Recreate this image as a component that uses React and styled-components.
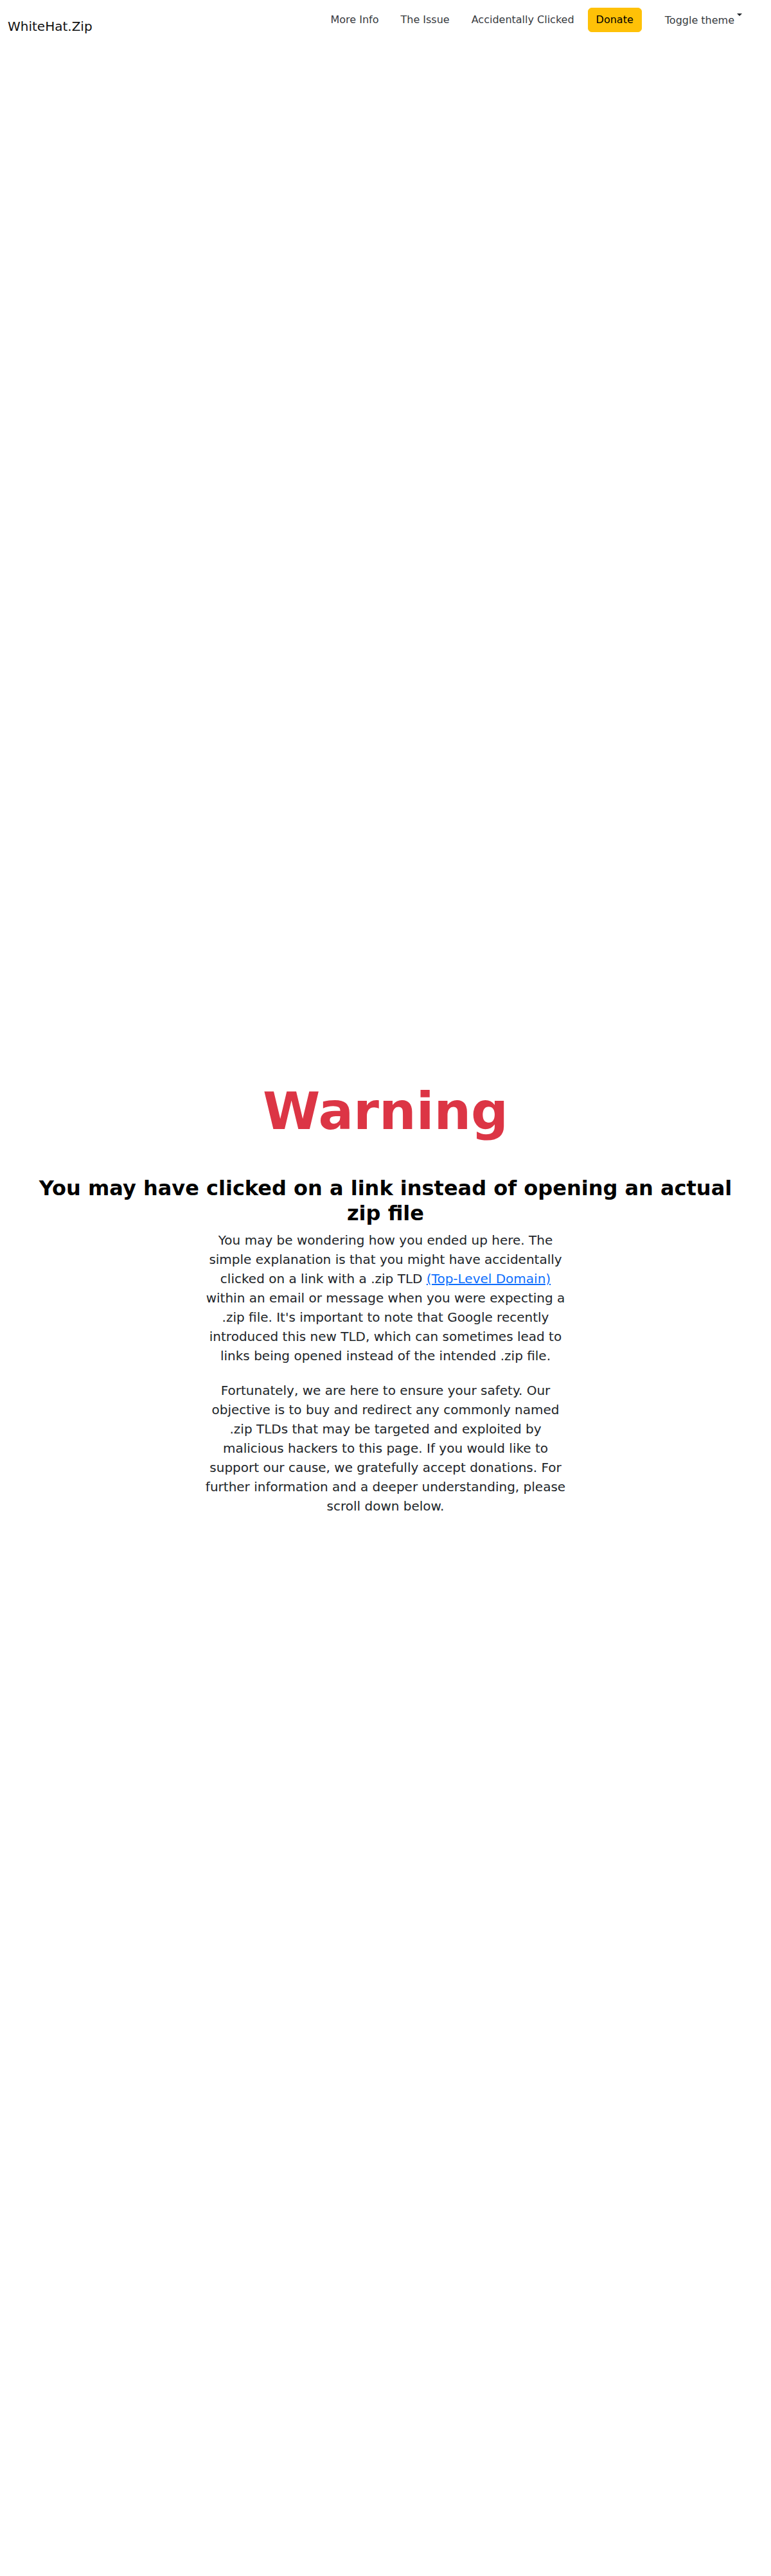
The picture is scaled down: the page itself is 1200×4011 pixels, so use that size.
import React from 'react';
import styled, { createGlobalStyle } from 'styled-components';

const GlobalStyle = createGlobalStyle`
  body {
    margin: 0;
    background: #ffffff;
    color: #212529;
    font-family: "DejaVu Sans", "Liberation Sans", sans-serif;
    font-size: 16px;
    line-height: 1.5;
  }
`;

const Header = styled.nav`
  display: flex;
  align-items: flex-start;
  justify-content: space-between;
  padding: 12px 33px 12px 12px;
`;

const Brand = styled.a`
  margin-top: 14px;
  font-size: 20px;
  line-height: 30px;
  color: #111111;
  text-decoration: none;
`;

const NavList = styled.ul`
  display: flex;
  align-items: center;
  height: 38px;
  margin: 0;
  padding: 0;
  list-style: none;
`;

const NavLink = styled.a`
  display: block;
  padding: 0 17px;
  line-height: 24px;
  color: #383b3f;
  text-decoration: none;
  cursor: pointer;
`;

const DonateButton = styled.button`
  margin-left: 4px;
  padding: 6px 12px;
  border: 1px solid #ffc107;
  border-radius: 6px;
  background: #ffc107;
  color: #000000;
  font-family: inherit;
  font-size: 16px;
  line-height: 24px;
  cursor: pointer;
`;

const ThemeToggle = styled.button`
  display: flex;
  align-items: flex-start;
  margin-left: 24px;
  padding: 2px 12px 0;
  border: 0;
  background: transparent;
  color: #383b3f;
  font-family: inherit;
  font-size: 16px;
  line-height: 24px;
  cursor: pointer;
`;

const Caret = styled.span`
  margin: 1px 0 0 4px;
  border-top: 4px solid #212529;
  border-left: 4px solid transparent;
  border-right: 4px solid transparent;
`;

const Hero = styled.main`
  padding-top: 1614px;
  text-align: center;
`;

const Container = styled.div`
  max-width: 1116px;
  margin: 0 auto;
  padding: 0 12px;
`;

const Title = styled.h1`
  margin: 0 0 52px;
  font-size: 81px;
  font-weight: 700;
  line-height: 1.2;
  color: #dc3545;
`;

const Subtitle = styled.h2`
  margin: 0 0 8px;
  font-size: 32px;
  font-weight: 700;
  line-height: 1.2;
  color: #000000;
`;

const TextColumn = styled.div`
  width: 576px;
  margin: 0 auto;
`;

const Lead = styled.p`
  margin: 0 0 24px;
  font-size: 20px;
  line-height: 30px;
  color: #212529;
`;

const InlineLink = styled.a`
  color: #0d6efd;
  text-decoration: underline;
`;

const links = ['More Info', 'The Issue', 'Accidentally Clicked'];

export default function App() {
  return (
    <>
      <GlobalStyle />
      <Header>
        <Brand href="#">WhiteHat.Zip</Brand>
        <NavList>
          {links.map((label) => (
            <li key={label}>
              <NavLink>{label}</NavLink>
            </li>
          ))}
          <li>
            <DonateButton>Donate</DonateButton>
          </li>
          <li>
            <ThemeToggle>
              Toggle theme
              <Caret />
            </ThemeToggle>
          </li>
        </NavList>
      </Header>

      <Hero>
        <Container>
          <Title>Warning</Title>
          <Subtitle>You may have clicked on a link instead of opening an actual zip file</Subtitle>
          <TextColumn>
            <Lead>
              You may be wondering how you ended up here. The simple explanation is that you might have
              accidentally clicked on a link with a .zip TLD{' '}
              <InlineLink href="#">(Top-Level Domain)</InlineLink> within an email or message when you
              were expecting a .zip file. It's important to note that Google recently introduced this new
              TLD, which can sometimes lead to links being opened instead of the intended .zip file.
            </Lead>
            <Lead>
              Fortunately, we are here to ensure your safety. Our objective is to buy and redirect any
              commonly named .zip TLDs that may be targeted and exploited by malicious hackers to this
              page. If you would like to support our cause, we gratefully accept donations. For further
              information and a deeper understanding, please scroll down below.
            </Lead>
          </TextColumn>
        </Container>
      </Hero>
    </>
  );
}
